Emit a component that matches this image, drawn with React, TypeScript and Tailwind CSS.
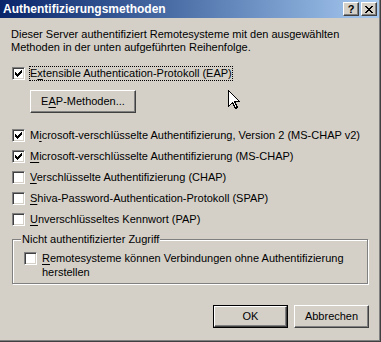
import React from 'react'

const FONT = "font-['Liberation_Sans',Arial,sans-serif]"

// classic 7x7 check mark, column runs of 3 pixels
const CHECK_COLS = [2, 3, 4, 3, 2, 1, 0]

function Checkbox({ checked = false }: { checked?: boolean }) {
  return (
    <span className="relative block w-[13px] h-[13px] shrink-0 bg-white border border-t-[#808080] border-l-[#808080] border-b-white border-r-white">
      <span className="absolute inset-0 shadow-[inset_1px_1px_0_#404040,inset_-1px_-1px_0_#d4d0c8]" />
      {checked && (
        <svg className="absolute left-[2px] top-[2px]" width="7" height="7" viewBox="0 0 7 7" shapeRendering="crispEdges">
          {CHECK_COLS.map((y, x) => (
            <rect key={x} x={x} y={y} width="1" height="3" fill="#000" />
          ))}
        </svg>
      )}
    </span>
  )
}

function U({ children }: { children: React.ReactNode }) {
  return <span className="underline underline-offset-[2px]">{children}</span>
}

function Row({ checked, children, focused = false }: { checked?: boolean; children: React.ReactNode; focused?: boolean }) {
  return (
    <div className="flex items-center h-[15px]">
      <Checkbox checked={checked} />
      {focused ? (
        <span className="ml-[4px] border border-dotted border-black leading-[13px] whitespace-nowrap">{children}</span>
      ) : (
        <span className="ml-[5px] leading-[13px] whitespace-nowrap">{children}</span>
      )}
    </div>
  )
}

function Button({ children, isDefault = false, className = '' }: { children: React.ReactNode; isDefault?: boolean; className?: string }) {
  return (
    <div className={`${isDefault ? 'border border-black' : ''} ${className}`}>
      <div className="h-full flex items-center justify-center bg-[#d4d0c8] border border-t-white border-l-white border-r-[#404040] border-b-[#404040] shadow-[inset_-1px_-1px_0_#808080]">
        {children}
      </div>
    </div>
  )
}

function TitleButton({ children }: { children: React.ReactNode }) {
  return (
    <div className="w-[16px] h-[14px] flex items-center justify-center bg-[#d4d0c8] border border-t-white border-l-white border-r-[#404040] border-b-[#404040] shadow-[inset_-1px_-1px_0_#808080]">
      {children}
    </div>
  )
}

export default function App() {
  return (
    <div className={`relative w-[381px] h-[342px] bg-[#404040] pr-px pb-px ${FONT} text-[11px] text-black`}>
      <div className="h-full bg-[#808080] pr-px pb-px">
        <div className="h-full bg-[#d4d0c8] flex flex-col">
          <div className="h-[18px] shrink-0 flex items-center pl-[3px] pr-[2px] bg-linear-to-r from-[#0a246a] to-[#a6caf0]">
            <span className="flex-1 text-white font-bold text-[12px] leading-none">Authentifizierungsmethoden</span>
            <TitleButton>
              <span className="font-bold text-[11px] leading-none mt-[1px]">?</span>
            </TitleButton>
            <div className="ml-[2px]">
              <TitleButton>
                <svg width="8" height="7" viewBox="0 0 8 7" shapeRendering="crispEdges">
                  <path d="M0 0h2v1h-2zM6 0h2v1h-2zM1 1h2v1h-2zM5 1h2v1h-2zM2 2h4v1h-4zM3 3h2v1h-2zM2 4h4v1h-4zM1 5h2v1h-2zM5 5h2v1h-2zM0 6h2v1h-2zM6 6h2v1h-2z" fill="#000" />
                </svg>
              </TitleButton>
            </div>
          </div>

          <div className="flex flex-col pl-[12px] pr-[11px]">
            <p className="mt-[10px] pl-[-1px] -ml-px leading-[13px]">
              Dieser Server authentifiziert Remotesysteme mit den ausgewählten
              <br />
              Methoden in der unten aufgeführten Reihenfolge.
            </p>

            <div className="mt-[12px]">
              <Row checked focused>
                E<U>x</U>tensible Authentication-Protokoll (EAP)
              </Row>
            </div>

            <Button className="mt-[9px] ml-[18px] w-[106px] h-[23px]">
              <span>
                E<U>A</U>P-Methoden...
              </span>
            </Button>

            <div className="mt-[15px] flex flex-col gap-[6px]">
              <Row checked>
                M<U>i</U>crosoft-verschlüsselte Authentifizierung, Version 2 (MS-CHAP v2)
              </Row>
              <Row checked>
                <U>M</U>icrosoft-verschlüsselte Authentifizierung (MS-CHAP)
              </Row>
              <Row>
                <U>V</U>erschlüsselte Authentifizierung (CHAP)
              </Row>
              <Row>
                <U>S</U>hiva-Password-Authentication-Protokoll (SPAP)
              </Row>
              <Row>
                <U>U</U>nverschlüsseltes Kennwort (PAP)
              </Row>
            </div>

            <div className="relative mt-[12px] h-[45px] border border-[#808080] shadow-[1px_1px_0_#ffffff,inset_1px_1px_0_#ffffff] pl-[11px] pt-[11px]">
              <span className="absolute left-[8px] -top-[7px] px-px bg-[#d4d0c8] leading-[13px]">
                Nicht authentifizierter Zugriff
              </span>
              <div className="flex items-start">
                <span className="mt-px">
                  <Checkbox />
                </span>
                <span className="ml-[5px] leading-[14px]">
                  <U>R</U>emotesysteme können Verbindungen ohne Authentifizierung
                  <br />
                  herstellen
                </span>
              </div>
            </div>

            <div className="mt-[21px] -mr-px flex justify-end gap-[6px]">
              <Button isDefault className="w-[75px] h-[23px]">
                OK
              </Button>
              <Button className="w-[75px] h-[23px]">Abbrechen</Button>
            </div>
          </div>
        </div>
      </div>

      <svg className="absolute left-[228px] top-[90px]" width="12" height="20" viewBox="0 0 12 20" shapeRendering="crispEdges">
        <path d="M0.5 0.5V16.5L4.5 12.5L7.5 18.5L9.5 17.5L6.5 11.5H11.5Z" fill="#fff" stroke="#000" strokeWidth="1" />
      </svg>
    </div>
  )
}
